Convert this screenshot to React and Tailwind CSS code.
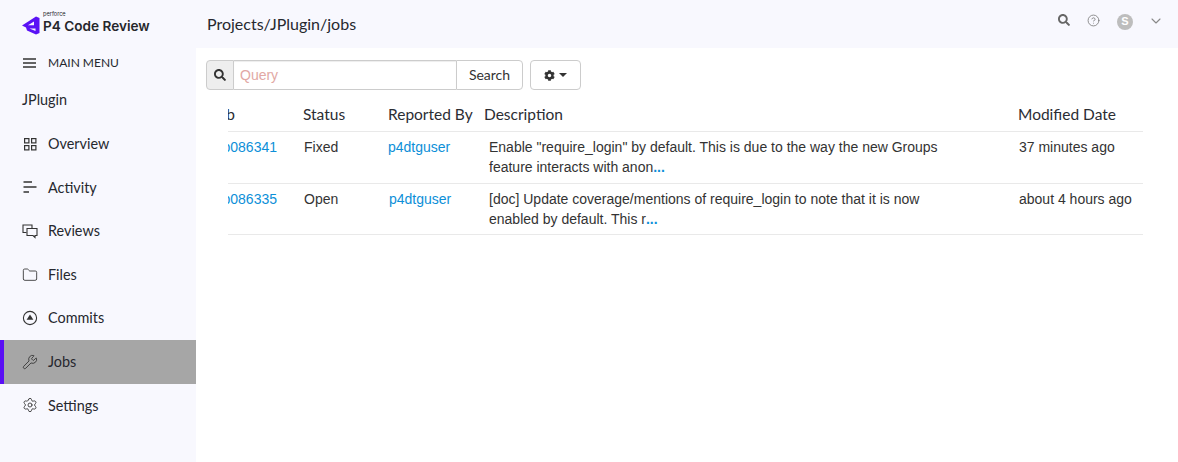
import { Wrench, Folder, Settings, ChevronDown, CircleHelp } from "lucide-react";
import { FaSearch, FaCog } from "react-icons/fa";

const lato = "font-['Lato',sans-serif]"
const arial = "font-['Liberation_Sans',Arial,sans-serif]"

const OverviewIcon = () => (
  <svg width="16" height="16" viewBox="0 0 16 16" fill="none" stroke="currentColor" strokeWidth="1.2">
    <rect x="2.6" y="2.6" width="4.3" height="4.3" />
    <rect x="9.6" y="2.6" width="4.3" height="4.3" />
    <rect x="2.6" y="9.6" width="4.3" height="4.3" />
    <rect x="9.6" y="9.6" width="4.3" height="4.3" />
  </svg>
)

const ActivityIcon = () => (
  <svg width="16" height="16" viewBox="0 0 16 16" fill="none" stroke="currentColor" strokeWidth="1.3">
    <path d="M1.5 3h8.5M1.5 8h13M1.5 13h5.5" />
  </svg>
)

const ReviewsIcon = () => (
  <svg width="16" height="16" viewBox="0 0 16 16" fill="none" stroke="currentColor" strokeWidth="1.1">
    <path d="M4.5 9.5H1V2h9v3" />
    <path d="M5 5.5h10v7h-2v2l-2-2H5z" />
  </svg>
)

const CommitsIcon = () => (
  <svg width="16" height="16" viewBox="0 0 16 16" fill="none" stroke="currentColor" strokeWidth="1.1">
    <circle cx="8" cy="8" r="6.6" />
    <path d="M8 4.6l3.4 5.2H4.6z" fill="currentColor" stroke="none" />
  </svg>
)

const MenuIcon = () => (
  <svg width="13" height="10" viewBox="0 0 13 10" stroke="#333" strokeWidth="1.3">
    <path d="M0 1h13M0 5h13M0 9h13" />
  </svg>
)

const Logo = () => (
  <svg width="18" height="19" viewBox="0 0 18 19" className="shrink-0">
    <path fillRule="evenodd" fill="#5a12f5" d="M0 9.5L14 0.5l3.5 1.5V17l-3.5 1.5L5 14.5l-1-3zM6 9.3l6 0V5.4zM7.5 12.5l6 2.6v-2.6z" />
  </svg>
)

const NavItem = ({ Icon, label, active }) => (
  <div className={`h-[43.6px] flex items-center border-l-4 ${active ? "border-[#5a0ff5] bg-[#a6a6a6]" : "border-transparent"}`}>
    <div className="w-[16px] ml-[18px] mr-[10px] flex justify-center text-[#333]">
      <Icon size={16} strokeWidth={1.3} />
    </div>
    <span className="text-[14.4px] text-[#26282f]">{label}</span>
  </div>
)

const jobs = [
  {
    id: "job086341", status: "Fixed", by: "p4dtguser", byPad: "ml-0",
    line1: 'Enable "require_login" by default. This is due to the way the new Groups',
    line2: "feature interacts with anon",
    date: "37 minutes ago",
    height: "h-[52px]",
  },
  {
    id: "job086335", status: "Open", by: "p4dtguser", byPad: "ml-px",
    line1: "[doc] Update coverage/mentions of require_login to note that it is now",
    line2: "enabled by default. This r",
    date: "about 4 hours ago",
    height: "h-[51px]",
  },
]

const JobRow = ({ job }) => (
  <div className={`flex ${job.height} pt-[5px] border-b border-[#e9e9e9] text-[14px] leading-[20px] text-[#333]`}>
    <div className="w-[75px] pr-[26px] flex justify-end overflow-hidden whitespace-nowrap text-[#0d8fd8]">{job.id}</div>
    <div className="w-[85px] pl-px">{job.status}</div>
    <div className="w-[101px] text-[#0d8fd8]"><span className={job.byPad}>{job.by}</span></div>
    <div className="w-[530px] whitespace-nowrap">
      <div>{job.line1}</div>
      <div>{job.line2}<span className="font-bold text-[#0d8fd8]">...</span></div>
    </div>
    <div className="whitespace-nowrap">{job.date}</div>
  </div>
)

export default function App() {
  return (
    <div className={`flex w-[1178px] h-[462px] overflow-hidden bg-white ${lato}`}>
      {/* Sidebar */}
      <aside className="w-[196px] shrink-0 bg-[#f8f8fe]">
        <div className="h-[48px] pl-[22px] pt-[10px] flex items-start gap-[3px]">
          <div className="mt-[6px]"><Logo /></div>
          <div className="font-['Inter',sans-serif] text-[#26272b]">
            <div className="text-[5.6px] leading-[7px] mt-px">perforce</div>
            <div className="text-[13.6px] leading-[17px] font-semibold whitespace-nowrap">P4 Code Review</div>
          </div>
        </div>
        <div className="h-[30px] pl-[23px] flex items-center text-[#26282f]">
          <MenuIcon />
          <span className="ml-[12px] text-[12px]">MAIN MENU</span>
        </div>
        <div className="h-[44px] pl-[22px] pb-px flex items-center text-[14.4px] text-[#26282f]">JPlugin</div>
        <nav>
          <NavItem Icon={OverviewIcon} label="Overview" />
          <NavItem Icon={ActivityIcon} label="Activity" />
          <NavItem Icon={ReviewsIcon} label="Reviews" />
          <NavItem Icon={Folder} label="Files" />
          <NavItem Icon={CommitsIcon} label="Commits" />
          <NavItem Icon={Wrench} label="Jobs" active />
          <NavItem Icon={Settings} label="Settings" />
        </nav>
      </aside>

      {/* Main */}
      <main className="flex-1 min-w-0">
        <header className="h-[48px] bg-[#f8f8fe] pl-[11px] pr-[14px] flex items-center justify-between">
          <h1 className="text-[16px] text-[#26282f]">Projects/JPlugin/jobs</h1>
          <div className="flex items-start pb-[6px] text-[#666]">
            <FaSearch size={12} className="mr-[17px] mt-[1px]" />
            <CircleHelp size={13} strokeWidth={1.5} className="mr-[17px] mt-px text-[#777]" />
            <div className={`w-[16px] h-[16px] mt-[1px] mr-[15px] rounded-full bg-[#bdbdbd] text-white text-[11px] font-bold flex items-center justify-center ${arial}`}>S</div>
            <ChevronDown size={16} strokeWidth={1.6} className="text-[#888]" />
          </div>
        </header>

        <div className="pl-[10px] pt-[12px]">
          {/* Search bar */}
          <div className={`flex h-[30px] text-[14px] ${arial}`}>
            <div className="w-[28px] flex items-center justify-center bg-[#eeeeee] border border-[#cccccc] rounded-l-[4px] text-[#333]">
              <FaSearch size={12} />
            </div>
            <div className="w-[222px] flex items-center pl-[6px] border-y border-[#cccccc] text-[#e2a8a4] shadow-[inset_0_1px_1px_rgba(0,0,0,0.075)]">Query</div>
            <div className={`w-[67px] pb-[2px] flex items-center justify-center border border-[#cccccc] rounded-r-[4px] text-[14px] text-[#333] ${lato}`}>Search</div>
            <div className="ml-[7px] w-[51px] flex items-center justify-center gap-[4px] border border-[#cccccc] rounded-[4px] text-[#333]">
              <FaCog size={11} />
              <span className="w-0 h-0 mb-px border-x-[4px] border-x-transparent border-t-[4px] border-t-[#333]" />
            </div>
          </div>

          {/* Jobs table */}
          <div className="ml-[22px] w-[915px] overflow-hidden mt-[11px]">
            <div className="flex h-[31px] items-start pt-[3px] border-b border-[#e9e9e9] text-[15.5px] leading-[20px] text-[#2b2d33]">
              <div className="w-[75px] pr-[68px] flex justify-end overflow-hidden whitespace-nowrap">Job</div>
              <div className="w-[85px]">Status</div>
              <div className="w-[96px] whitespace-nowrap">Reported By</div>
              <div className="w-[534px]">Description</div>
              <div className="whitespace-nowrap">Modified Date</div>
            </div>
            <div className={arial}>
              {jobs.map(job => <JobRow key={job.id} job={job} />)}
            </div>
          </div>
        </div>
      </main>
    </div>
  )
}
